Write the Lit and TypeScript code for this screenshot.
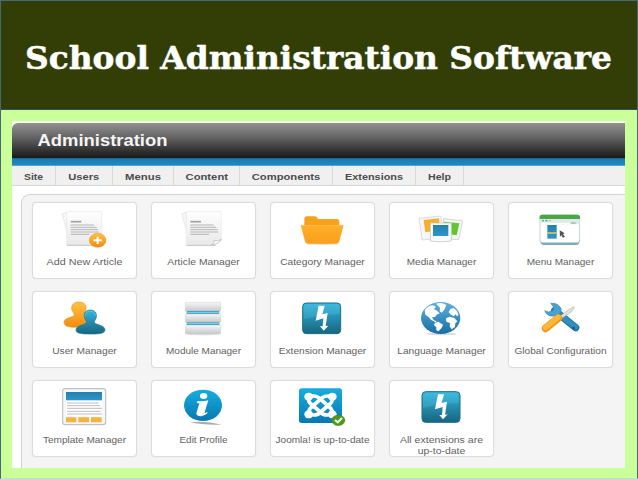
import { LitElement, html, svg, css } from "lit";
import { customElement } from "lit/decorators.js";

const bolt = (x: number, y: number) => svg`
  <g transform="translate(${x} ${y})">
    <rect x="1" y="1" width="114" height="92" rx="11" fill="url(#teal)" stroke="#1c6f88" stroke-width="3"/>
    <path d="M4 14Q4 4 14 4H102Q112 4 112 14V34Q60 36 4 50Z" fill="#5ccbea" opacity=".25"/>
    <path d="M49 9L67 9L60 35L76 31L70 70L78 69L64 84L53 71L61 71L63 47L40 54Z" fill="#fff"/>
  </g>`;

const paper = (x: number) => svg`
  <g transform="translate(${x} 64)">
    <path d="M-14 9L2 3V64Z" fill="#f6f6f6" stroke="#e2e2e2" stroke-width="2"/>
    <path d="M0 2H105V88L86 102H0Z" fill="url(#paper)" stroke="#e8e8e8" stroke-width="2"/>
    <path d="M0 103H88" stroke="#c4c4c4" stroke-width="3"/>
    <path d="M76 101Q87 94 84 88Q97 93 105 84Q101 98 76 101Z" fill="#fff" stroke="#b5b5b5" stroke-width="2"/>
    <path d="M12 32H44" stroke="#a2a2a2" stroke-width="5"/>
    <path d="M12 42H82M12 49H90M12 56H94M12 63H96M12 70H68" stroke="#b4b4b4" stroke-width="3"/>
  </g>`;

interface Tile { lines: [string, number][]; box: string; art: unknown }

const tiles: Tile[] = [
  { lines: [["Add New Article", 76]], box: "120 52 144 126", art: svg`${paper(140)}
    <ellipse cx="233" cy="152" rx="25" ry="21" fill="url(#amber)" stroke="#e98a12" stroke-width="1.5"/>
    <path d="M233 141V163M220 152H246" stroke="#fff" stroke-width="6"/>` },
  { lines: [["Article Manager", 72.5]], box: "477 52 144 126", art: paper(499) },
  { lines: [["Category Manager", 84.5]], box: "114 52 144 126", art: svg`
    <ellipse cx="187" cy="162" rx="50" ry="4" fill="#ddd"/>
    <path d="M133 110V88Q133 80 141 80H165Q172 80 174 88H230Q238 88 238 96V110Z" fill="#f8a11a"/>
    <path d="M122 107H251L238 155Q236 162 229 162H144Q137 162 135 155Z" fill="url(#folder)"/>
    <path d="M124 108H250" stroke="#ffc153" stroke-width="2"/>` },
  { lines: [["Media Manager", 69.5]], box: "471 52 144 126", art: svg`
    <path d="M477 86L542 79L550 145L487 151Z" fill="#f7f7f7" stroke="#cbcbcb" stroke-width="2"/>
    <path d="M491 91L537 86L540 120L496 128Z" fill="#f9ad29"/>
    <path d="M551 87L608 93L596 150L547 147Z" fill="#f5f5f5" stroke="#c6c6c6" stroke-width="2"/>
    <path d="M551 96L598 101L590 137L560 132Z" fill="#5fc82d"/>
    <path d="M511 100H574V154Q542 159 511 154Z" fill="#fafafa" stroke="#c4c9ce" stroke-width="2.5"/>
    <path d="M519 106H565V139H519Z" fill="url(#blue)"/>` },
  { lines: [["Menu Manager", 67.5]], box: "169 52 144 126", art: svg`
    <path d="M181 150Q182 166 192 166H290Q300 166 300 150Z" fill="#7fa9bb"/>
    <rect x="181" y="76" width="119" height="83" rx="7" fill="#fff" stroke="#a9bdc4" stroke-width="2"/>
    <path d="M180 88V82Q180 75 188 75H292Q301 75 301 82V88Z" fill="#4aa744"/>
    <path d="M182 88H299V104H182Z" fill="#dce9ea"/>
    <path d="M187 93H193" stroke="#5faf54" stroke-width="4"/><path d="M197 93H203" stroke="#3399cf" stroke-width="4"/><path d="M207 93H213" stroke="#e8bb52" stroke-width="4"/>
    <path d="M184 101H270" stroke="#fff" stroke-width="4"/><path d="M274 100H288" stroke="#899da6" stroke-width="3"/>
    <path d="M203 106H231V147H203Z" fill="url(#blue)"/><path d="M203 130H231" stroke="#d5c66a" stroke-width="5"/>
    <path d="M240 122L255 131L250 134L256 141L250 144L245 137L241 141Z" fill="#555"/>` },

  { lines: [["User Manager", 64.5]], box: "120 48 144 126", art: svg`
    <path d="M177 66C195 66 201 78 197 92C194 102 190 108 192 111C202 116 218 119 218 131C215 142 195 142 174 142C152 142 132 141 132 127C132 114 153 113 161 108C167 103 154 94 155 82C156 72 165 66 177 66Z" fill="url(#amber)" stroke="#e59a20" stroke-width="2"/>
    <path d="M211 90C224 90 231 99 229 111C227 120 221 124 224 129C231 135 255 136 255 150C254 162 233 162 211 162C188 162 168 161 168 150C168 137 190 136 199 129C202 124 194 119 193 110C191 99 198 90 211 90Z" fill="url(#teal)" stroke="#18758e" stroke-width="2"/>
    <path d="M197 108C196 97 202 94 211 94C220 94 226 97 225 108" fill="none" stroke="#67d0e9" stroke-width="2"/>` },
  { lines: [["Module Manager", 75]], box: "477 48 144 126", art: svg`
    <ellipse cx="548" cy="163" rx="50" ry="3" fill="#ddd"/>
    <path d="M500 90H598V102H500ZM500 123H598V135H500Z" fill="#2e9fcb"/>
    <path d="M500 98H598M500 131H598" stroke="#8ad4ec" stroke-width="3"/>
    <rect x="496" y="67" width="106" height="26" rx="2" fill="url(#silver)" stroke="#bbb"/>
    <rect x="496" y="102" width="106" height="25" rx="2" fill="url(#silver)" stroke="#bbb"/>
    <rect x="496" y="136" width="106" height="25" rx="2" fill="url(#silver)" stroke="#bbb"/>` },
  { lines: [["Extension Manager", 87.5]], box: "114 48 144 126", art: bolt(127, 68) },
  { lines: [["Language Manager", 88.5]], box: "471 48 144 126", art: svg`
    <ellipse cx="545" cy="162" rx="46" ry="4" fill="#ddd"/>
    <ellipse cx="542" cy="114" rx="59" ry="48" fill="url(#globe)"/>
    <path d="M494 91Q502 78 519 76L528 80L522 87L531 92L539 100L530 104L525 111L516 112L521 120L530 124L526 127L513 119L505 110L496 104ZM528 71Q546 66 559 75L554 88L545 98L539 94L540 83ZM525 128L535 125L549 134L545 144L535 154L529 151L529 142L522 135ZM558 115L569 110L583 114L592 124L586 130L585 141L575 148L569 139L570 129L559 125ZM566 97L571 87L581 84L591 93L596 106L591 108L586 103L582 109L573 104Z" fill="#fff"/>` },
  { lines: [["Global Configuration", 92]], box: "169 48 144 126", art: svg`
    <path d="M225 92L288 143" stroke="#23749f" stroke-width="22" stroke-linecap="round"/>
    <path d="M226 92L287 141" stroke="#318fbd" stroke-width="16" stroke-linecap="round"/>
    <path d="M213 70Q236 67 245 87Q244 105 224 108Q202 111 195 92L207 96L221 91L222 82Z" fill="#48a2d0" stroke="#2d7da7" stroke-width="1.5"/>
    <path d="M239 110L267 89L282 80L284 84L273 97L245 116Z" fill="#e0e2e4" stroke="#999" stroke-width="1.5"/>
    <path d="M198 145L236 114" stroke="#ee951d" stroke-width="23" stroke-linecap="round"/>
    <path d="M198 143L235 112" stroke="#ffb736" stroke-width="16" stroke-linecap="round"/>
    <path d="M281 143L283 145" stroke="#135f86" stroke-width="7" stroke-linecap="round"/>` },

  { lines: [["Template Manager", 83]], box: "120 45 144 126", art: svg`
    <rect x="128" y="56" width="129" height="108" rx="8" fill="#f6f7f8" stroke="#bfc3c8" stroke-width="3.5"/>
    <path d="M138 66H246V91H138Z" fill="url(#blue)"/>
    <path d="M138 93H246V139H138Z" fill="#fff"/>
    <path d="M141 99H235M141 107H240M141 115H246M141 124H242M141 132H246" stroke="#bdbdbd" stroke-width="3"/>
    <path d="M138 142H169V157H138ZM175 142H207V157H175ZM213 142H245V157H213Z" fill="#f7b23d"/>` },
  { lines: [["Edit Profile", 48]], box: "477 45 144 126", art: svg`
    <path d="M509 157Q550 151 606 164Q550 166 509 157Z" fill="#aaa"/>
    <ellipse cx="549" cy="106" rx="57" ry="47" fill="url(#info)"/>
    <ellipse cx="551" cy="78" rx="11" ry="9" fill="#fff"/>
    <path d="M533 93Q548 95 565 91L554 127Q555 131 561 126L563 129Q551 141 538 138Q526 136 530 126L538 101Q536 98 530 98Z" fill="#fff"/>` },
  { lines: [["Joomla! is up-to-date", 94]], box: "114 45 144 126", art: svg`
    <rect x="117" y="55" width="129" height="104" rx="8" fill="url(#info)"/>
    <g fill="none" stroke="#fff" stroke-width="11" stroke-linejoin="round" stroke-linecap="round">
      <path d="M147 81Q143 94 153 102L188 132Q201 138 215 132"/>
      <path d="M215 81Q220 94 210 102L175 132Q162 138 148 132"/>
      <path d="M148 81Q163 74 176 83L208 111Q219 120 215 132"/>
      <path d="M215 81Q200 74 187 83L155 111Q144 120 148 132"/>
    </g>
    <g fill="#fff"><ellipse cx="146" cy="80" rx="13" ry="12"/><ellipse cx="217" cy="80" rx="13" ry="12"/><ellipse cx="146" cy="133" rx="13" ry="12"/><ellipse cx="217" cy="133" rx="13" ry="12"/></g>
    <ellipse cx="235" cy="151" rx="20" ry="16" fill="#4d981d" stroke="#347714"/>
    <path d="M225 150L233 157L246 144" fill="none" stroke="#fff" stroke-width="6"/>` },
  { lines: [["All extensions are", 83], ["up-to-date", 47.5]], box: "471 45 144 126", art: bolt(485, 64) },
];

const menus: [string, number, number][] = [
  ["Site", 19, 44], ["Users", 31, 56.5], ["Menus", 36, 61], ["Content", 42.5, 66.5],
  ["Components", 68.5, 93], ["Extensions", 58, 83], ["Help", 23, 48],
];

@customElement("app-root")
export class AppRoot extends LitElement {
  static styles = css`
    :host { display: block; width: 638px; height: 479px; overflow: hidden; }
    * { box-sizing: border-box; }
    svg { display: block; }
    .slide { display: flex; flex-direction: column; width: 638px; height: 479px; background: #cbff99; border: 1px solid #426a78; border-bottom-color: #c3dcd0; }
    .title { height: 109px; background: #323e06; border-bottom: 1px solid #2b505c; flex: none; }
    .title text { font: bold 32px "DejaVu Serif", serif; fill: #fff; stroke: #fff; stroke-width: 0.5px; }
    .panel { width: 613px; height: 347px; margin: 11px 0 0 11px; background: #fff; border-top: 2px solid #f3ffe9; display: flex; flex-direction: column; overflow: hidden; }
    .bar { height: 35px; flex: none; border-radius: 6px 0 0 0; background: linear-gradient(#929292, #6b6b6b 35%, #373737 75%, #191919); }
    .bar text { font: bold 17px "Liberation Sans", sans-serif; fill: #f5f5f5; }
    .stripe { height: 8px; flex: none; background: linear-gradient(#146184 0, #1a7fb6 20%, #1d88bf 80%, #6fb0d0); }
    .menu { display: flex; height: 20px; flex: none; background: #f0f0f0; border-bottom: 1px solid #d5d5d5; }
    .item { height: 19px; border-right: 1px solid #d9d9d9; display: flex; justify-content: center; flex: none; }
    .item text { font: bold 9.6px "Liberation Sans", sans-serif; fill: #4c4c4c; }
    .board { flex: 1; margin: 8px 0 0 9px; border: 1px solid #d2d2d2; border-width: 1px 0 0 1px; border-radius: 9px 0 0 0; background: #f4f4f4;
      display: grid; grid-template-columns: repeat(5, 105px); grid-auto-rows: 77px; column-gap: 14px; row-gap: 12px; padding: 7px 0 0 9.7px; }
    .card { background: #fff; border: 1px solid #dcdcdc; border-radius: 4px; box-shadow: 0 0 1px #ddd; display: flex; flex-direction: column; align-items: center; padding-top: 4px; }
    .icon { width: 48px; height: 42px; flex: none; }
    .label { width: 103px; height: 29px; flex: none; }
    .label text { font: 9.6px "Liberation Sans", sans-serif; fill: #626262; }
  `;

  render() {
    return html`
      <div class="slide">
        <header class="title"><svg width="636" height="108"><text x="24" y="67.8" textLength="587" lengthAdjust="spacingAndGlyphs">School Administration Software</text></svg></header>
        <main class="panel">
          <div class="bar"><svg width="613" height="35"><text x="25.5" y="22.6" textLength="130" lengthAdjust="spacingAndGlyphs">Administration</text></svg></div>
          <div class="stripe"></div>
          <nav class="menu">
            ${menus.map(([name, length, width]) => html`<div class="item" style="width:${width}px"><svg width=${width - 1} height="19"><text text-anchor="middle" x=${(width - 1) / 2} y="13.6" textLength=${length} lengthAdjust="spacingAndGlyphs">${name}</text></svg></div>`)}
          </nav>
          <section class="board">
            ${tiles.map((t) => html`
              <div class="card">
                <svg class="icon" viewBox=${t.box}>${this.paints()}${t.art}</svg>
                <svg class="label">${t.lines.map(([text, length], i) => svg`<text text-anchor="middle" x="51.5" y=${15.8 + i * 11} textLength=${length} lengthAdjust="spacingAndGlyphs">${text}</text>`)}</svg>
              </div>`)}
          </section>
        </main>
      </div>`;
  }

  private paints() {
    const paint = (id: string, a: string, b: string) => svg`<linearGradient id=${id} x1="0" y1="0" x2="0" y2="1"><stop offset="0" stop-color=${a}/><stop offset="1" stop-color=${b}/></linearGradient>`;
    return svg`<defs>
      ${paint("teal", "#35b5dc", "#17657f")}
      ${paint("amber", "#ffc342", "#f28b12")}
      ${paint("folder", "#ffae2b", "#f9a01d")}
      ${paint("blue", "#2381ae", "#3095c8")}
      ${paint("silver", "#f6f6f6", "#c5c8ca")}
      ${paint("globe", "#5fb0dc", "#176fa6")}
      ${paint("info", "#16addf", "#0878b0")}
      ${paint("paper", "#ffffff", "#e9e9e9")}
    </defs>`;
  }
}
